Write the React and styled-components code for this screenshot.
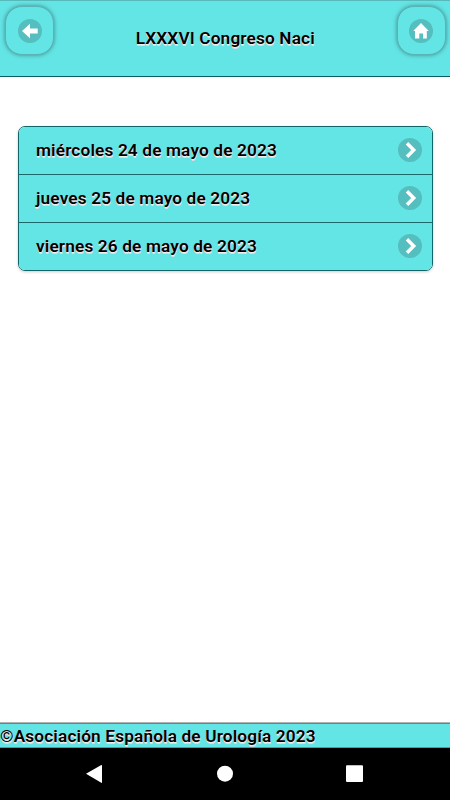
import React from "react";
import styled, { createGlobalStyle } from "styled-components";

const Global = createGlobalStyle`
  body { margin: 0; background: #fff; }
  * { box-sizing: border-box; }
`;

const Screen = styled.div`
  width: 450px;
  height: 800px;
  display: flex;
  flex-direction: column;
  overflow: hidden;
  background: #fff;
  color: #000;
  font: 600 17.2px/21px Roboto, sans-serif;
  letter-spacing: 0.17px;
  text-shadow: 0 1px 0 #eee, 0 1.5px 0 #ddd;
`;

const Header = styled.header`
  flex: none;
  height: 77px;
  padding: 6px 4.5px 0 5px;
  display: flex;
  align-items: flex-start;
  justify-content: space-between;
  background: #64e5e5;
  border-bottom: 1px solid #075b5c;
  box-shadow: inset 0 1px 0 #58b9ba;
`;

const Title = styled.h1`
  margin: 22px 0 0;
  font: inherit;
  white-space: nowrap;
`;

const HeaderButton = styled.button`
  width: 49px;
  height: 49px;
  padding: 0;
  display: grid;
  place-items: center;
  border: 1px solid #59b4b6;
  border-radius: 17px;
  background: #64e5e5;
  box-shadow: 0 0 4px rgba(45, 80, 85, 0.65);
`;

const Disc = styled.span`
  width: 24px;
  height: 24px;
  display: grid;
  place-items: center;
  border-radius: 50%;
  background: #55bebf;

  svg { display: block; }
`;

const Main = styled.main`
  flex: 1;
  padding: 49px 17px 0 18px;
`;

const List = styled.ul`
  margin: 0;
  padding: 0;
  list-style: none;
  border: 1px solid #126669;
  border-radius: 7px;
  overflow: hidden;
  box-shadow: 0 1px 3px rgba(0, 0, 0, 0.2);
`;

const Row = styled.li`
  height: 48px;
  padding: 0 10px 1px 17px;
  display: flex;
  align-items: center;
  justify-content: space-between;
  background: #64e5e5;
  border-bottom: 1px solid #1d686b;

  &:last-child { height: 47px; border-bottom: 0; }
`;

const Footer = styled.footer`
  flex: none;
  height: 25px;
  padding-top: 2px;
  background: #64e5e5;
  border-top: 1px solid #469395;
  border-bottom: 1px solid #46a1a2;
  box-shadow: 0 -1px 0 #b3b3b3;
  white-space: nowrap;
`;

const NavBar = styled.nav`
  flex: none;
  height: 52px;
  background: #000;

  svg { display: block; }
`;

const days = [
  "miércoles 24 de mayo de 2023",
  "jueves 25 de mayo de 2023",
  "viernes 26 de mayo de 2023",
];

const ArrowLeft = () => (
  <svg width="24" height="24" viewBox="0 0 24 24" fill="#fff">
    <path d="M4 12 12 4.8V9.5H19.7V14.5H12V19.2Z" />
  </svg>
);

const Home = () => (
  <svg width="24" height="24" viewBox="0 0 24 24" fill="#fff">
    <path d="M12 4 19.8 12H17.8V19.5H14V14.5H10.3V19.5H6V12H4.2Z" />
  </svg>
);

const Chevron = () => (
  <svg width="24" height="24" viewBox="0 0 24 24" fill="none" stroke="#fff" strokeWidth="3.5">
    <path d="M9 5.2 15.7 12 9 18.8" />
  </svg>
);

export default function App() {
  return (
    <Screen>
      <Global />
      <Header>
        <HeaderButton aria-label="Atrás"><Disc><ArrowLeft /></Disc></HeaderButton>
        <Title>LXXXVI Congreso Naci</Title>
        <HeaderButton aria-label="Inicio"><Disc><Home /></Disc></HeaderButton>
      </Header>
      <Main>
        <List>
          {days.map((day) => (
            <Row key={day}>
              <span>{day}</span>
              <Disc><Chevron /></Disc>
            </Row>
          ))}
        </List>
      </Main>
      <Footer>©Asociación Española de Urología 2023</Footer>
      <NavBar>
        <svg width="450" height="52" viewBox="0 0 450 52" fill="#fff">
          <path d="M86 25.8 101.3 17Q102 16.8 102 17.5V34.5Q102 35.2 101.3 34.8Z" />
          <circle cx="225" cy="25.7" r="8" />
          <rect x="346" y="17.3" width="17" height="16.7" rx="1" />
        </svg>
      </NavBar>
    </Screen>
  );
}
